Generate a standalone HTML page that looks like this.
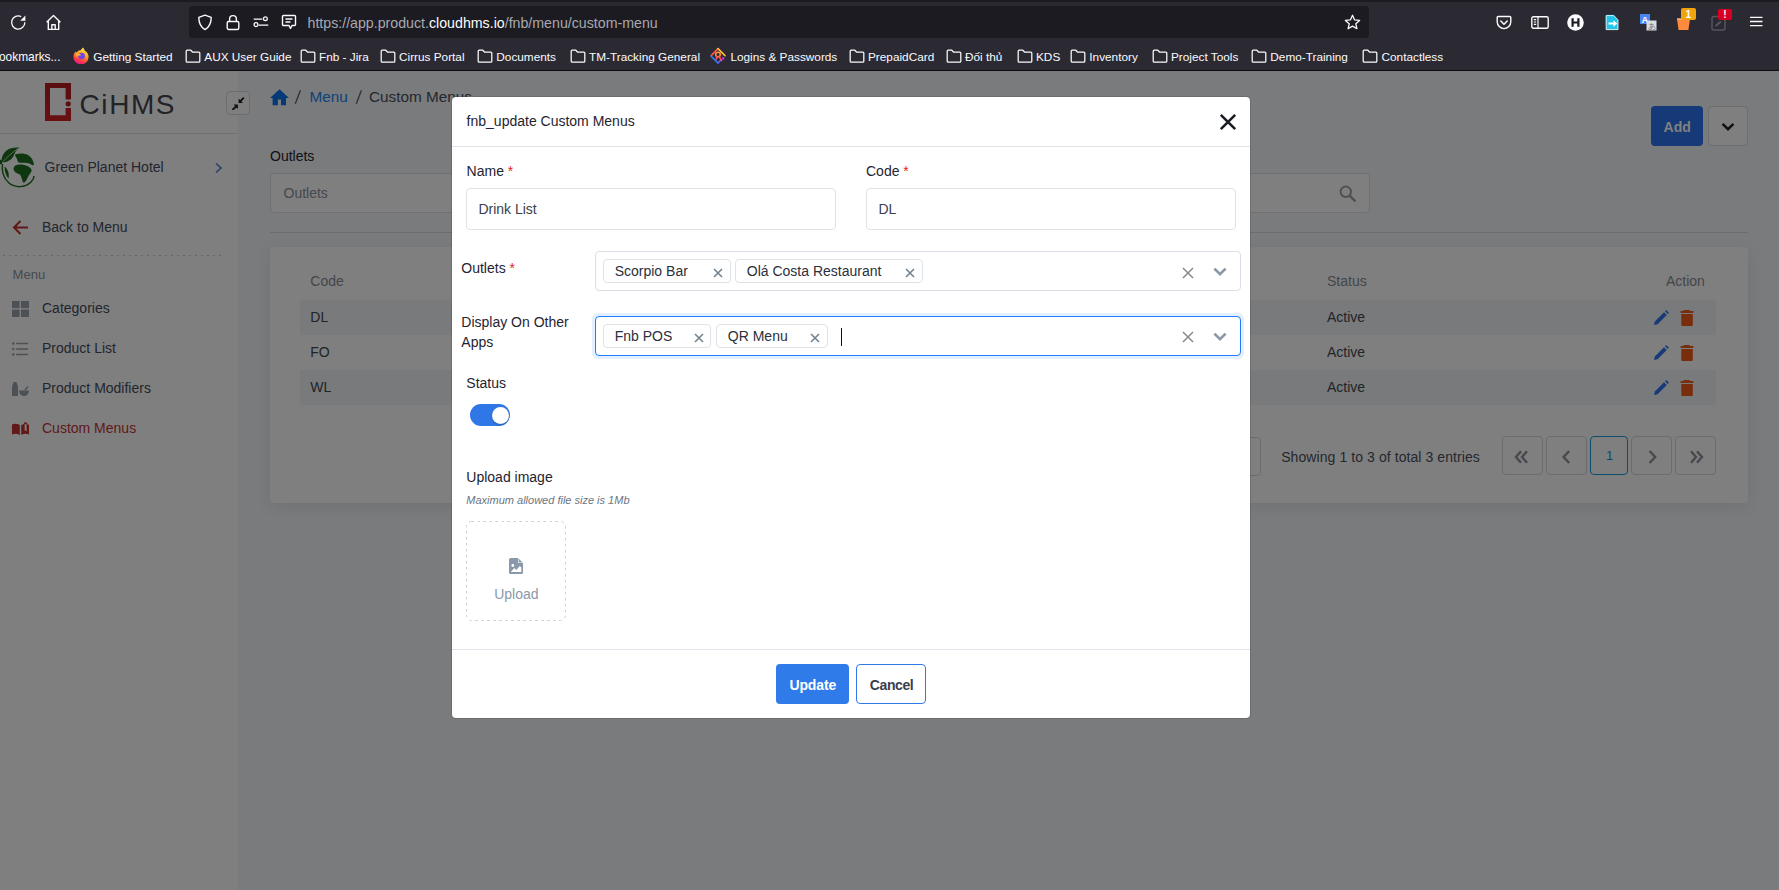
<!DOCTYPE html>
<html><head><meta charset="utf-8"><title>CiHMS</title>
<style>
html,body{margin:0;padding:0;}
body{width:1779px;height:890px;overflow:hidden;position:relative;background:#2b2a33;font-family:"Liberation Sans",sans-serif;}
.t{position:absolute;white-space:nowrap;}
.r{position:absolute;box-sizing:border-box;}
</style></head><body>

<div class="r" style="left:0px;top:0px;width:1779px;height:2px;background:#1c1b22"></div>
<div class="r" style="left:0px;top:2px;width:1779px;height:68px;background:#2b2a33"></div>
<div class="r" style="left:189px;top:6px;width:1180px;height:32px;background:#1c1b22;border-radius:4px"></div>
<div class="r" style="left:0px;top:70px;width:1779px;height:1px;background:#0b0b0e"></div>
<svg class="r" style="left:10px;top:14px;" width="17" height="17" viewBox="0 0 17 17"><path d="M11.2 2.6A6.6 6.6 0 1 0 14.8 8.2" fill="none" stroke="#fbfbfe" stroke-width="1.3"/><path d="M15.4 1.6V6.8H10.2z" fill="#fbfbfe"/></svg>
<svg class="r" style="left:45px;top:14px;" width="17" height="17" viewBox="0 0 17 17"><path d="M1.6 8.2 8.5 1.6l6.9 6.6M3.3 7v8.4h10.4V7M6.8 15.4v-4.6h3.4v4.6" fill="none" stroke="#fbfbfe" stroke-width="1.4" stroke-linejoin="round"/></svg>
<svg class="r" style="left:197px;top:14px;" width="16" height="17" viewBox="0 0 16 17"><path d="M8 1.2 14.2 3.4c0 6-1.8 9.6-6.2 12.2C3.6 13 1.8 9.4 1.8 3.4z" fill="none" stroke="#fbfbfe" stroke-width="1.4" stroke-linejoin="round"/></svg>
<svg class="r" style="left:226px;top:14px;" width="14" height="17" viewBox="0 0 14 17"><rect x="1.2" y="7.5" width="11.6" height="8" rx="1.5" fill="none" stroke="#fbfbfe" stroke-width="1.4"/><path d="M3.6 7.5V5a3.4 3.4 0 0 1 6.8 0v2.5" fill="none" stroke="#fbfbfe" stroke-width="1.4"/></svg>
<svg class="r" style="left:253px;top:16px;" width="16" height="12" viewBox="0 0 16 12"><path d="M.7 3.2h8.6M5.6 9.2h9.7" stroke="#fbfbfe" stroke-width="1.3" fill="none"/><circle cx="12.4" cy="2.8" r="1.9" fill="none" stroke="#fbfbfe" stroke-width="1.25"/><circle cx="3" cy="8.6" r="1.9" fill="none" stroke="#fbfbfe" stroke-width="1.25"/></svg>
<svg class="r" style="left:281px;top:14px;" width="16" height="16" viewBox="0 0 16 16"><path d="M2.5 1.5h11a1 1 0 0 1 1 1v8a1 1 0 0 1-1 1H11l-1.5 2.8L8 11.5H2.5a1 1 0 0 1-1-1v-8a1 1 0 0 1 1-1z" fill="none" stroke="#fbfbfe" stroke-width="1.4" stroke-linejoin="round"/><path d="M4.5 5h7M4.5 8h5" stroke="#fbfbfe" stroke-width="1.3"/></svg>
<div class="t" style="left:307.5px;top:14.23px;font-size:14.2px;line-height:18px;color:#fbfbfe;font-weight:normal;font-style:normal;"><span style="color:#a8a8b1">https://app.product.</span><span style="color:#fbfbfe">cloudhms.io</span><span style="color:#a8a8b1">/fnb/menu/custom-menu</span></div>
<svg class="r" style="left:1344px;top:14px;" width="17" height="16" viewBox="0 0 17 16"><path d="M8.5 1.3l2.1 4.6 5 .5-3.8 3.4 1.1 4.9-4.4-2.6-4.4 2.6 1.1-4.9L1.4 6.4l5-.5z" fill="none" stroke="#fbfbfe" stroke-width="1.3" stroke-linejoin="round"/></svg>
<div class="t" style="left:-1px;top:49.53px;font-size:11.9px;line-height:15px;color:#fbfbfe;font-weight:normal;font-style:normal;">ookmarks...</div>
<svg class="r" style="left:73px;top:47px;" width="16" height="17" viewBox="0 0 16 17"><defs><linearGradient id="ffg" x1="0.75" y1="0" x2="0.35" y2="1"><stop offset="0" stop-color="#fff44f"/><stop offset="0.45" stop-color="#ff9a1a"/><stop offset="0.78" stop-color="#ff3750"/><stop offset="1" stop-color="#e31587"/></linearGradient></defs><path d="M10 .6c1 1.2 1.6 2.3 1.8 3.2C14 5 15.6 7.4 15.6 9.8A7.6 7.6 0 0 1 .4 9.8C.4 7.5 1.4 5.6 2.8 4.4 3 5 3.5 5.4 4 5.6 4.5 4 6 3.2 7.5 3.3 8.4 2.2 9.4 1.4 10 .6z" fill="url(#ffg)"/><circle cx="8.6" cy="9" r="3.3" fill="#6f47e8"/><path d="M3 6.4c1.3-.4 2.7 0 3.8.6.7.4 1.1.9 1.3 1.5-1 .3-2 .1-3 0-1 .1-1.4.9-1.2 1.8C2.9 9.5 2.6 7.7 3 6.4z" fill="#ffb135"/></svg>
<div class="t" style="left:93.3px;top:49.56px;font-size:11.8px;line-height:15px;color:#fbfbfe;font-weight:normal;font-style:normal;">Getting Started</div>
<svg class="r" style="left:184.5px;top:48.5px;" width="16" height="15" viewBox="0 0 16 15"><path d="M1.2 2.2Q1.2 1.2 2.2 1.2H5.8L7.5 3H13.8Q14.8 3 14.8 4V12.2Q14.8 13.2 13.8 13.2H2.2Q1.2 13.2 1.2 12.2Z" fill="none" stroke="#fbfbfe" stroke-width="1.25" stroke-linejoin="round"/></svg>
<div class="t" style="left:204.3px;top:49.56px;font-size:11.8px;line-height:15px;color:#fbfbfe;font-weight:normal;font-style:normal;">AUX User Guide</div>
<svg class="r" style="left:299.5px;top:48.5px;" width="16" height="15" viewBox="0 0 16 15"><path d="M1.2 2.2Q1.2 1.2 2.2 1.2H5.8L7.5 3H13.8Q14.8 3 14.8 4V12.2Q14.8 13.2 13.8 13.2H2.2Q1.2 13.2 1.2 12.2Z" fill="none" stroke="#fbfbfe" stroke-width="1.25" stroke-linejoin="round"/></svg>
<div class="t" style="left:319px;top:49.56px;font-size:11.8px;line-height:15px;color:#fbfbfe;font-weight:normal;font-style:normal;">Fnb - Jira</div>
<svg class="r" style="left:379.5px;top:48.5px;" width="16" height="15" viewBox="0 0 16 15"><path d="M1.2 2.2Q1.2 1.2 2.2 1.2H5.8L7.5 3H13.8Q14.8 3 14.8 4V12.2Q14.8 13.2 13.8 13.2H2.2Q1.2 13.2 1.2 12.2Z" fill="none" stroke="#fbfbfe" stroke-width="1.25" stroke-linejoin="round"/></svg>
<div class="t" style="left:399px;top:49.56px;font-size:11.8px;line-height:15px;color:#fbfbfe;font-weight:normal;font-style:normal;">Cirrus Portal</div>
<svg class="r" style="left:476.5px;top:48.5px;" width="16" height="15" viewBox="0 0 16 15"><path d="M1.2 2.2Q1.2 1.2 2.2 1.2H5.8L7.5 3H13.8Q14.8 3 14.8 4V12.2Q14.8 13.2 13.8 13.2H2.2Q1.2 13.2 1.2 12.2Z" fill="none" stroke="#fbfbfe" stroke-width="1.25" stroke-linejoin="round"/></svg>
<div class="t" style="left:496.3px;top:49.56px;font-size:11.8px;line-height:15px;color:#fbfbfe;font-weight:normal;font-style:normal;">Documents</div>
<svg class="r" style="left:569.5px;top:48.5px;" width="16" height="15" viewBox="0 0 16 15"><path d="M1.2 2.2Q1.2 1.2 2.2 1.2H5.8L7.5 3H13.8Q14.8 3 14.8 4V12.2Q14.8 13.2 13.8 13.2H2.2Q1.2 13.2 1.2 12.2Z" fill="none" stroke="#fbfbfe" stroke-width="1.25" stroke-linejoin="round"/></svg>
<div class="t" style="left:589px;top:49.56px;font-size:11.8px;line-height:15px;color:#fbfbfe;font-weight:normal;font-style:normal;">TM-Tracking General</div>
<div class="t" style="left:730.4px;top:49.56px;font-size:11.8px;line-height:15px;color:#fbfbfe;font-weight:normal;font-style:normal;">Logins &amp; Passwords</div>
<svg class="r" style="left:848.5px;top:48.5px;" width="16" height="15" viewBox="0 0 16 15"><path d="M1.2 2.2Q1.2 1.2 2.2 1.2H5.8L7.5 3H13.8Q14.8 3 14.8 4V12.2Q14.8 13.2 13.8 13.2H2.2Q1.2 13.2 1.2 12.2Z" fill="none" stroke="#fbfbfe" stroke-width="1.25" stroke-linejoin="round"/></svg>
<div class="t" style="left:868px;top:49.56px;font-size:11.8px;line-height:15px;color:#fbfbfe;font-weight:normal;font-style:normal;">PrepaidCard</div>
<svg class="r" style="left:945.5px;top:48.5px;" width="16" height="15" viewBox="0 0 16 15"><path d="M1.2 2.2Q1.2 1.2 2.2 1.2H5.8L7.5 3H13.8Q14.8 3 14.8 4V12.2Q14.8 13.2 13.8 13.2H2.2Q1.2 13.2 1.2 12.2Z" fill="none" stroke="#fbfbfe" stroke-width="1.25" stroke-linejoin="round"/></svg>
<div class="t" style="left:965px;top:49.56px;font-size:11.8px;line-height:15px;color:#fbfbfe;font-weight:normal;font-style:normal;">Đối thủ</div>
<svg class="r" style="left:1016.5px;top:48.5px;" width="16" height="15" viewBox="0 0 16 15"><path d="M1.2 2.2Q1.2 1.2 2.2 1.2H5.8L7.5 3H13.8Q14.8 3 14.8 4V12.2Q14.8 13.2 13.8 13.2H2.2Q1.2 13.2 1.2 12.2Z" fill="none" stroke="#fbfbfe" stroke-width="1.25" stroke-linejoin="round"/></svg>
<div class="t" style="left:1036px;top:49.56px;font-size:11.8px;line-height:15px;color:#fbfbfe;font-weight:normal;font-style:normal;">KDS</div>
<svg class="r" style="left:1069.5px;top:48.5px;" width="16" height="15" viewBox="0 0 16 15"><path d="M1.2 2.2Q1.2 1.2 2.2 1.2H5.8L7.5 3H13.8Q14.8 3 14.8 4V12.2Q14.8 13.2 13.8 13.2H2.2Q1.2 13.2 1.2 12.2Z" fill="none" stroke="#fbfbfe" stroke-width="1.25" stroke-linejoin="round"/></svg>
<div class="t" style="left:1089.3px;top:49.56px;font-size:11.8px;line-height:15px;color:#fbfbfe;font-weight:normal;font-style:normal;">Inventory</div>
<svg class="r" style="left:1151.5px;top:48.5px;" width="16" height="15" viewBox="0 0 16 15"><path d="M1.2 2.2Q1.2 1.2 2.2 1.2H5.8L7.5 3H13.8Q14.8 3 14.8 4V12.2Q14.8 13.2 13.8 13.2H2.2Q1.2 13.2 1.2 12.2Z" fill="none" stroke="#fbfbfe" stroke-width="1.25" stroke-linejoin="round"/></svg>
<div class="t" style="left:1171px;top:49.56px;font-size:11.8px;line-height:15px;color:#fbfbfe;font-weight:normal;font-style:normal;">Project Tools</div>
<svg class="r" style="left:1250.5px;top:48.5px;" width="16" height="15" viewBox="0 0 16 15"><path d="M1.2 2.2Q1.2 1.2 2.2 1.2H5.8L7.5 3H13.8Q14.8 3 14.8 4V12.2Q14.8 13.2 13.8 13.2H2.2Q1.2 13.2 1.2 12.2Z" fill="none" stroke="#fbfbfe" stroke-width="1.25" stroke-linejoin="round"/></svg>
<div class="t" style="left:1270.3px;top:49.56px;font-size:11.8px;line-height:15px;color:#fbfbfe;font-weight:normal;font-style:normal;">Demo-Training</div>
<svg class="r" style="left:1361.5px;top:48.5px;" width="16" height="15" viewBox="0 0 16 15"><path d="M1.2 2.2Q1.2 1.2 2.2 1.2H5.8L7.5 3H13.8Q14.8 3 14.8 4V12.2Q14.8 13.2 13.8 13.2H2.2Q1.2 13.2 1.2 12.2Z" fill="none" stroke="#fbfbfe" stroke-width="1.25" stroke-linejoin="round"/></svg>
<div class="t" style="left:1381.5px;top:49.56px;font-size:11.8px;line-height:15px;color:#fbfbfe;font-weight:normal;font-style:normal;">Contactless</div>
<svg class="r" style="left:710px;top:47px;" width="16" height="17" viewBox="0 0 16 17"><g fill="none" stroke-width="1.6" stroke-linecap="round"><path d="M1.2 8.6 8 1.6" stroke="#ff5a4a"/><path d="M8 1.6 15 8.6" stroke="#ffc23d"/><path d="M1.2 9.2 8 16" stroke="#2e86ff"/><path d="M8 16 11.2 12.8" stroke="#6a5cff"/><circle cx="8" cy="7.6" r="2.3" stroke="#ff8a3d"/><path d="M6.6 9.8 6.4 12.2M9.3 9.8 11.6 13.6" stroke="#ff4a5a"/></g><circle cx="13.2" cy="11.4" r="1.3" fill="#b833e1"/></svg>
<svg class="r" style="left:1496px;top:15px;" width="16" height="15" viewBox="0 0 16 15"><path d="M2.2 1.5h11.6a1 1 0 0 1 1 1v4.3a6.8 6.8 0 0 1-13.6 0V2.5a1 1 0 0 1 1-1z" fill="none" stroke="#fbfbfe" stroke-width="1.4"/><path d="M4.8 6 8 9.2 11.2 6" fill="none" stroke="#fbfbfe" stroke-width="1.5" stroke-linecap="round" stroke-linejoin="round"/></svg>
<svg class="r" style="left:1531px;top:16px;" width="18" height="13" viewBox="0 0 18 13"><rect x="0.8" y="0.8" width="16.4" height="11.4" rx="1.5" fill="none" stroke="#fbfbfe" stroke-width="1.4"/><path d="M7 .8v11.4M2.8 3.6h2.4M2.8 6h2.4M2.8 8.4h2.4" stroke="#fbfbfe" stroke-width="1.2"/></svg>
<svg class="r" style="left:1567px;top:14px;" width="17" height="17" viewBox="0 0 17 17"><circle cx="8.5" cy="8.5" r="8.3" fill="#fbfbfe"/><path d="M5.6 4.3v8.4M11.4 4.3v8.4M5.6 8.5h5.8" stroke="#1c1b22" stroke-width="2.2"/></svg>
<svg class="r" style="left:1604px;top:14px;" width="17" height="17" viewBox="0 0 17 17"><rect x="0.8" y="0.2" width="11" height="11.5" rx="1.8" fill="#0c4a6e"/><path d="M2.2 1.6h7.6l4.2 4.2v9.8H2.2z" fill="#22c4e8" stroke="#eafaff" stroke-width="0.9"/><path d="M4.5 8.6h5V6.2l3.7 3.4-3.7 3.4v-2.4h-5z" fill="#fff"/></svg>
<svg class="r" style="left:1640px;top:14px;" width="17" height="17" viewBox="0 0 17 17"><rect x="0" y="0" width="10" height="10" fill="#4a85f4"/><text x="5" y="8.6" font-size="9.5" font-weight="bold" text-anchor="middle" fill="#fff" font-family="Liberation Sans">A</text><rect x="6.5" y="6.5" width="10" height="10" fill="#d9dde3"/><text x="11.5" y="15" font-size="8" text-anchor="middle" fill="#5f6b78" font-family="Liberation Sans">あ</text></svg>
<svg class="r" style="left:1676px;top:15px;" width="15" height="16" viewBox="0 0 15 16"><path d="M1 4h13l-1.6 11H2.6z" fill="#ff8a3d"/><path d="M1 4h13" stroke="#ffb27a" stroke-width="1.5"/></svg>
<div class="r" style="left:1681px;top:8px;width:15px;height:12px;background:#f0a30a;border-radius:2px"></div>
<div class="t" style="left:1685.5px;top:8.68px;font-size:10px;line-height:12px;color:#fff;font-weight:bold;font-style:normal;">1</div>
<svg class="r" style="left:1711px;top:15px;" width="15" height="16" viewBox="0 0 15 16"><rect x="1" y="1.5" width="13" height="13.5" rx="2" fill="none" stroke="#55555e" stroke-width="1.5"/><path d="M4.5 11 10 6.5" fill="none" stroke="#55555e" stroke-width="2"/></svg>
<div class="r" style="left:1718px;top:9px;width:14px;height:11px;background:#d70022;border-radius:2px"></div>
<div class="t" style="left:1723.3px;top:8.68px;font-size:10px;line-height:12px;color:#fff;font-weight:bold;font-style:normal;">!</div>
<svg class="r" style="left:1750px;top:15px;" width="13" height="12" viewBox="0 0 13 12"><path d="M0 2.4h12.5M0 6.5h12.5M0 10.6h12.5" stroke="#fbfbfe" stroke-width="1.3"/></svg>
<div class="r" style="left:0px;top:71px;width:238px;height:819px;background:#ffffff"></div>
<div class="r" style="left:238px;top:71px;width:1541px;height:819px;background:#f4f6f8"></div>
<svg class="r" style="left:45px;top:83px;" width="26" height="38" viewBox="0 0 26 38"><defs><linearGradient id="lr" x1="0" y1="0" x2="0" y2="1"><stop offset="0" stop-color="#b41c20"/><stop offset="1" stop-color="#d42127"/></linearGradient></defs><path d="M0 0H26V16.6H20.6V5H5V32.2H20.6V24.9H26V38H0Z" fill="url(#lr)"/><circle cx="23.2" cy="20.8" r="2.6" fill="#b81e22"/></svg>
<div class="t" style="left:79.6px;top:86.95px;font-size:28px;line-height:35px;color:#44464c;font-weight:normal;font-style:normal;letter-spacing:1.55px">CiHMS</div>
<div class="r" style="left:226px;top:91px;width:24px;height:24px;border:1px solid #d5d9de;border-radius:4px;background:#fff"></div>
<svg class="r" style="left:231px;top:96px;" width="14" height="14" viewBox="0 0 14 14"><path d="M7.6 6.9V2.6L11.9 6.9z M6.9 8.6H2.6L6.9 12.9z" fill="#1d1f22"/><path d="M9.2 5.3 12.9 1.6M5.3 10.2 1.4 13.9" stroke="#1d1f22" stroke-width="1.9"/></svg>
<div class="r" style="left:0px;top:133px;width:238px;height:1px;background:#dfe3e8"></div>
<svg class="r" style="left:0px;top:142px;" width="36" height="48" viewBox="0 0 36 48"><g fill="#1e6e1e"><path d="M2.5 22C1.5 28 3 36 9 41C15 46 25 46 31 40C33 38 34 36 34 34" fill="none" stroke="#1e6e1e" stroke-width="1.5"/><path d="M1.5 20.5C1 14 5 8 11 6.3C14 5.5 17 5.3 19.8 5.6C17 7 15.5 9.5 14 13C12.5 17 8 20.5 1.5 20.5z"/><path d="M4.5 24.5C8 27 9.2 31 8.7 36.5C6 34 4.5 29 4.5 24.5z"/><path d="M0 17.5L2 18.5 2 22 0 22.5z"/><path d="M15 12.5C19 11 24 11 28 13C31 15 33.5 18 34 22.5L32.5 23.5C31 22 29 21.3 27 21C24.5 20.5 21.5 21 18.5 20.5C17 19 17.5 17 16.5 16C16 15 15.2 14 15 12.5z"/><path d="M13.5 26.5C13.8 23.8 16.8 22.3 20.5 22.6C24.5 22.8 27.8 24 30.5 26C32 27.5 31.8 29.5 30.5 31C29 33 27.5 35.5 26.5 38C25.5 40 24 41 23 40.5C22 37.5 21.5 34.5 20 32.5C17 31.5 13.8 30 13.5 26.5z"/></g><path d="M2.5 20C7 15.5 12 10.5 18.5 6.3" fill="none" stroke="#fff" stroke-width=".7"/></svg>
<div class="t" style="left:44.6px;top:158.30px;font-size:14px;line-height:18px;color:#464c5c;font-weight:normal;font-style:normal;">Green Planet Hotel</div>
<svg class="r" style="left:214px;top:162px;" width="9" height="12" viewBox="0 0 9 12"><path d="M2 1.5 7 6l-5 4.5" fill="none" stroke="#5b7bd5" stroke-width="1.6"/></svg>
<svg class="r" style="left:12px;top:219px;" width="17" height="17" viewBox="0 0 17 17"><path d="M16 8.5H2M8.5 2 2 8.5 8.5 15" fill="none" stroke="#c42f2f" stroke-width="2"/></svg>
<div class="t" style="left:42px;top:218.30px;font-size:14px;line-height:18px;color:#464c5c;font-weight:normal;font-style:normal;">Back to Menu</div>
<svg class="r" style="left:3px;top:254px;" width="220" height="2" viewBox="0 0 220 2"><path d="M0 1.5H220" stroke="#c4c9cf" stroke-width="1" stroke-dasharray="2 4"/></svg>
<div class="t" style="left:12.6px;top:266.65px;font-size:13px;line-height:16px;color:#8d939c;font-weight:normal;font-style:normal;">Menu</div>
<svg class="r" style="left:12px;top:301px;" width="17" height="16" viewBox="0 0 17 16"><rect x="0" y="0" width="7.6" height="7.2" fill="#9aa1aa"/><rect x="9" y="0" width="8" height="7.2" fill="#9aa1aa"/><rect x="0" y="8.6" width="7.6" height="7.4" fill="#9aa1aa"/><rect x="9" y="8.6" width="8" height="7.4" fill="#9aa1aa"/></svg>
<div class="t" style="left:42px;top:299.30px;font-size:14px;line-height:18px;color:#464c5c;font-weight:normal;font-style:normal;">Categories</div>
<svg class="r" style="left:12px;top:342px;" width="17" height="14" viewBox="0 0 17 14"><circle cx="1.3" cy="1.5" r="1.2" fill="#9aa1aa"/><circle cx="1.3" cy="7" r="1.2" fill="#9aa1aa"/><circle cx="1.3" cy="12.5" r="1.2" fill="#9aa1aa"/><path d="M4.2 1.5H16M4.2 7H16M4.2 12.5H16" stroke="#9aa1aa" stroke-width="1.3"/></svg>
<div class="t" style="left:42px;top:339.30px;font-size:14px;line-height:18px;color:#464c5c;font-weight:normal;font-style:normal;">Product List</div>
<svg class="r" style="left:12px;top:382px;" width="17" height="15" viewBox="0 0 17 15"><path d="M0 4.5 1.5 0h3L6 4.5V14H0z" fill="#9aa1aa"/><path d="M7 8.5h10c0 3-2 5.5-5 5.5s-5-2.5-5-5.5z" fill="#9aa1aa"/><path d="M13 8l3-3.5" stroke="#9aa1aa" stroke-width="1.5"/></svg>
<div class="t" style="left:42px;top:379.30px;font-size:14px;line-height:18px;color:#464c5c;font-weight:normal;font-style:normal;">Product Modifiers</div>
<svg class="r" style="left:12px;top:422px;" width="17" height="14" viewBox="0 0 17 14"><path d="M0 2.5c2.5-1 5-1 7.8.6V13C5 11.5 2.5 11.5 0 12.5z" fill="#c23232"/><path d="M17 2.5v10c-2.5-1-5-1-7.8.5V3.1c1-.6 2-1 3-1.2V0l3 1v9l-3-1.2V3" fill="#c23232"/><path d="M12.2 1.9V8.5l2.8 1V2.4" fill="#fff" stroke="#c23232" stroke-width=".8"/></svg>
<div class="t" style="left:42px;top:419.30px;font-size:14px;line-height:18px;color:#c23434;font-weight:normal;font-style:normal;">Custom Menus</div>
<svg class="r" style="left:270px;top:88.5px;" width="19" height="17" viewBox="0 0 19 17"><path d="M9.5 .3 0 9.1h2.6v7.2h5.3v-5.8H11v5.8h5V9.1H19z" fill="#0b74f0"/></svg>
<svg class="r" style="left:294px;top:89px;" width="8" height="16" viewBox="0 0 8 16"><path d="M6.4 1.3 1.3 14.8" stroke="#5c6370" stroke-width="1.3"/></svg>
<div class="t" style="left:309.5px;top:87.35px;font-size:15.3px;line-height:19px;color:#1a82f5;font-weight:normal;font-style:normal;">Menu</div>
<svg class="r" style="left:355px;top:89px;" width="8" height="16" viewBox="0 0 8 16"><path d="M6.4 1.3 1.3 14.8" stroke="#5c6370" stroke-width="1.3"/></svg>
<div class="t" style="left:369px;top:87.35px;font-size:15.3px;line-height:19px;color:#4a505c;font-weight:normal;font-style:normal;">Custom Menus</div>
<div class="r" style="left:1651px;top:106px;width:52px;height:40px;background:#2c74ef;border-radius:4px"></div>
<div class="t" style="left:1663.6px;top:118.30px;font-size:14px;line-height:18px;color:#ffffff;font-weight:bold;font-style:normal;">Add</div>
<div class="r" style="left:1708px;top:106px;width:40px;height:40px;border:1px solid #d8dce2;border-radius:4px;background:#fff"></div>
<svg class="r" style="left:1721px;top:121.5px;" width="14" height="10" viewBox="0 0 14 10"><path d="M1.6 1.8 7 7.2l5.4-5.4" fill="none" stroke="#1d2433" stroke-width="2.6"/></svg>
<div class="t" style="left:270px;top:147.30px;font-size:14px;line-height:18px;color:#1f2430;font-weight:normal;font-style:normal;">Outlets</div>
<div class="r" style="left:270px;top:173px;width:1100px;height:40px;background:#ffffff;border:1px solid #dde1e6;border-radius:4px"></div>
<div class="t" style="left:283.5px;top:184.30px;font-size:14px;line-height:18px;color:#8a9099;font-weight:normal;font-style:normal;">Outlets</div>
<svg class="r" style="left:1339px;top:185px;" width="18" height="18" viewBox="0 0 18 18"><circle cx="6.8" cy="6.8" r="5.2" fill="none" stroke="#9ca1a8" stroke-width="2"/><path d="M10.6 10.6 16.5 16.5" stroke="#9ca1a8" stroke-width="2.4"/></svg>
<div class="r" style="left:270px;top:232px;width:1478px;height:1px;background:#d5d9de"></div>
<div class="r" style="left:270px;top:247px;width:1478px;height:256px;background:#ffffff;border-radius:4px;box-shadow:0 4px 16px rgba(0,0,0,.08)"></div>
<div class="t" style="left:310.3px;top:272.30px;font-size:14px;line-height:18px;color:#868c95;font-weight:normal;font-style:normal;">Code</div>
<div class="t" style="left:1327px;top:272.30px;font-size:14px;line-height:18px;color:#868c95;font-weight:normal;font-style:normal;">Status</div>
<div class="t" style="left:1666px;top:272.30px;font-size:14px;line-height:18px;color:#868c95;font-weight:normal;font-style:normal;">Action</div>
<div class="r" style="left:300px;top:300px;width:1416px;height:35px;background:#f2f4f7"></div>
<div class="t" style="left:310.3px;top:308.30px;font-size:14px;line-height:18px;color:#444953;font-weight:normal;font-style:normal;">DL</div>
<div class="t" style="left:1327px;top:308.30px;font-size:14px;line-height:18px;color:#444953;font-weight:normal;font-style:normal;">Active</div>
<svg class="r" style="left:1653px;top:310px;" width="16" height="16" viewBox="0 0 16 16"><path d="M1 15l.8-3.6L11 2.2 13.8 5 4.6 14.2zM12 1.2l1.2-1.2 2.8 2.8-1.2 1.2z" fill="#2c76f0"/></svg>
<svg class="r" style="left:1680px;top:309px;" width="14" height="18" viewBox="0 0 14 18"><path d="M3.6 1h6.2v1.6H3.6zM.6 1.9h12.8v2.2H.6zM1.3 5.1h11.5v10.9a1 1 0 0 1-1 1H2.3a1 1 0 0 1-1-1z" fill="#f05a1a"/></svg>
<div class="t" style="left:310.3px;top:343.30px;font-size:14px;line-height:18px;color:#444953;font-weight:normal;font-style:normal;">FO</div>
<div class="t" style="left:1327px;top:343.30px;font-size:14px;line-height:18px;color:#444953;font-weight:normal;font-style:normal;">Active</div>
<svg class="r" style="left:1653px;top:345px;" width="16" height="16" viewBox="0 0 16 16"><path d="M1 15l.8-3.6L11 2.2 13.8 5 4.6 14.2zM12 1.2l1.2-1.2 2.8 2.8-1.2 1.2z" fill="#2c76f0"/></svg>
<svg class="r" style="left:1680px;top:344px;" width="14" height="18" viewBox="0 0 14 18"><path d="M3.6 1h6.2v1.6H3.6zM.6 1.9h12.8v2.2H.6zM1.3 5.1h11.5v10.9a1 1 0 0 1-1 1H2.3a1 1 0 0 1-1-1z" fill="#f05a1a"/></svg>
<div class="r" style="left:300px;top:370px;width:1416px;height:35px;background:#f2f4f7"></div>
<div class="t" style="left:310.3px;top:378.30px;font-size:14px;line-height:18px;color:#444953;font-weight:normal;font-style:normal;">WL</div>
<div class="t" style="left:1327px;top:378.30px;font-size:14px;line-height:18px;color:#444953;font-weight:normal;font-style:normal;">Active</div>
<svg class="r" style="left:1653px;top:380px;" width="16" height="16" viewBox="0 0 16 16"><path d="M1 15l.8-3.6L11 2.2 13.8 5 4.6 14.2zM12 1.2l1.2-1.2 2.8 2.8-1.2 1.2z" fill="#2c76f0"/></svg>
<svg class="r" style="left:1680px;top:379px;" width="14" height="18" viewBox="0 0 14 18"><path d="M3.6 1h6.2v1.6H3.6zM.6 1.9h12.8v2.2H.6zM1.3 5.1h11.5v10.9a1 1 0 0 1-1 1H2.3a1 1 0 0 1-1-1z" fill="#f05a1a"/></svg>
<div class="r" style="left:1200px;top:437px;width:61px;height:39px;border:1px solid #d5d9de;border-radius:4px;background:#fff"></div>
<div class="t" style="left:1281.2px;top:448.30px;font-size:14px;line-height:18px;color:#4a505c;font-weight:normal;font-style:normal;letter-spacing:0.08px">Showing 1 to 3 of total 3 entries</div>
<div class="r" style="left:1502px;top:436px;width:41px;height:39px;border:1px solid #d5d9de;border-radius:4px;background:#fff"></div>
<div class="r" style="left:1546px;top:436px;width:41px;height:39px;border:1px solid #d5d9de;border-radius:4px;background:#fff"></div>
<div class="r" style="left:1590px;top:436px;width:38px;height:39px;border:1.5px solid #1a9ad6;border-radius:4px;background:#fff"></div>
<div class="r" style="left:1631px;top:436px;width:41px;height:39px;border:1px solid #d5d9de;border-radius:4px;background:#fff"></div>
<div class="r" style="left:1675px;top:436px;width:41px;height:39px;border:1px solid #d5d9de;border-radius:4px;background:#fff"></div>
<svg class="r" style="left:1514px;top:450px;" width="16" height="14" viewBox="0 0 16 14"><path d="M7 1.2 2 7l5 5.8M13 1.2 8 7l5 5.8" fill="none" stroke="#8c939d" stroke-width="2.4"/></svg>
<svg class="r" style="left:1561px;top:450px;" width="10" height="14" viewBox="0 0 10 14"><path d="M8.2 1 2.6 7l5.6 6" fill="none" stroke="#8c939d" stroke-width="2.4"/></svg>
<div class="t" style="left:1606px;top:447.65px;font-size:13px;line-height:16px;color:#1a8fd0;font-weight:normal;font-style:normal;">1</div>
<svg class="r" style="left:1648px;top:450px;" width="10" height="14" viewBox="0 0 10 14"><path d="M1.6 1 7.2 7l-5.6 6" fill="none" stroke="#8c939d" stroke-width="2.4"/></svg>
<svg class="r" style="left:1689px;top:450px;" width="16" height="14" viewBox="0 0 16 14"><path d="M2 1.2 7 7l-5 5.8M8 1.2 13 7l-5 5.8" fill="none" stroke="#8c939d" stroke-width="2.4"/></svg>
<div class="r" style="left:0px;top:71px;width:1779px;height:819px;background:rgba(0,0,0,.5)"></div>
<div class="r" style="left:452px;top:97px;width:798px;height:621px;background:#ffffff;border-radius:4px;box-shadow:0 0 0 1px rgba(0,0,0,.12)"></div>
<div class="t" style="left:466.6px;top:112.30px;font-size:14px;line-height:18px;color:#1f2430;font-weight:normal;font-style:normal;">fnb_update Custom Menus</div>
<svg class="r" style="left:1219px;top:113px;" width="18" height="18" viewBox="0 0 18 18"><path d="M1.8 1.8 16.2 16.2M16.2 1.8 1.8 16.2" stroke="#1a1d24" stroke-width="2.6"/></svg>
<div class="r" style="left:452px;top:146px;width:798px;height:1px;background:#dee4ea"></div>
<div class="t" style="left:466.6px;top:162.30px;font-size:14px;line-height:18px;color:#1f2430;font-weight:normal;font-style:normal;">Name <span style="color:#e02424">*</span></div>
<div class="r" style="left:466px;top:188px;width:370px;height:42px;border:1px solid #dfe3e8;border-radius:4px"></div>
<div class="t" style="left:478.4px;top:200.30px;font-size:14px;line-height:18px;color:#3a404c;font-weight:normal;font-style:normal;">Drink List</div>
<div class="t" style="left:866px;top:162.30px;font-size:14px;line-height:18px;color:#1f2430;font-weight:normal;font-style:normal;">Code <span style="color:#e02424">*</span></div>
<div class="r" style="left:866px;top:188px;width:370px;height:42px;border:1px solid #dfe3e8;border-radius:4px"></div>
<div class="t" style="left:878.4px;top:200.30px;font-size:14px;line-height:18px;color:#3a404c;font-weight:normal;font-style:normal;">DL</div>
<div class="t" style="left:461.3px;top:259.30px;font-size:14px;line-height:18px;color:#1f2430;font-weight:normal;font-style:normal;">Outlets <span style="color:#e02424">*</span></div>
<div class="r" style="left:595px;top:251px;width:646px;height:40px;border:1px solid #d9dfe6;border-radius:4px"></div>
<div class="r" style="left:603px;top:259px;width:128px;height:24px;border:1px solid #dfe3e8;border-radius:4px;background:#fff"></div>
<div class="t" style="left:614.6999999999999px;top:262.30px;font-size:14px;line-height:18px;color:#2a303c;font-weight:normal;font-style:normal;">Scorpio Bar</div>
<svg class="r" style="left:713px;top:267.5px;" width="10" height="10" viewBox="0 0 10 10"><path d="M1 1l8 8M9 1 1 9" stroke="#72838f" stroke-width="1.6"/></svg>
<div class="r" style="left:735px;top:259px;width:188px;height:24px;border:1px solid #dfe3e8;border-radius:4px;background:#fff"></div>
<div class="t" style="left:746.8px;top:262.30px;font-size:14px;line-height:18px;color:#2a303c;font-weight:normal;font-style:normal;">Olá Costa Restaurant</div>
<svg class="r" style="left:905px;top:267.5px;" width="10" height="10" viewBox="0 0 10 10"><path d="M1 1l8 8M9 1 1 9" stroke="#72838f" stroke-width="1.6"/></svg>
<svg class="r" style="left:1182px;top:267px;" width="12" height="12" viewBox="0 0 12 12"><path d="M1 1l10 10M11 1 1 11" stroke="#8a8a8a" stroke-width="1.5"/></svg>
<svg class="r" style="left:1213px;top:267px;" width="14" height="10" viewBox="0 0 14 10"><path d="M1.4 1.6 7 7.2l5.6-5.6" fill="none" stroke="#8a99a8" stroke-width="2.7"/></svg>
<div class="t" style="left:461.3px;top:313.30px;font-size:14px;line-height:18px;color:#1f2430;font-weight:normal;font-style:normal;">Display On Other</div>
<div class="t" style="left:461.3px;top:333.30px;font-size:14px;line-height:18px;color:#1f2430;font-weight:normal;font-style:normal;">Apps</div>
<div class="r" style="left:592px;top:313px;width:652px;height:46px;border-radius:6px;background:rgba(31,123,255,.12)"></div>
<div class="r" style="left:595px;top:316px;width:646px;height:40px;border:1.6px solid #1f7bff;border-radius:4px;background:#fff"></div>
<div class="r" style="left:603px;top:324px;width:108px;height:24px;border:1px solid #dfe3e8;border-radius:4px;background:#fff"></div>
<div class="t" style="left:614.6999999999999px;top:327.30px;font-size:14px;line-height:18px;color:#2a303c;font-weight:normal;font-style:normal;">Fnb POS</div>
<svg class="r" style="left:694px;top:332.5px;" width="10" height="10" viewBox="0 0 10 10"><path d="M1 1l8 8M9 1 1 9" stroke="#72838f" stroke-width="1.6"/></svg>
<div class="r" style="left:716px;top:324px;width:112px;height:24px;border:1px solid #dfe3e8;border-radius:4px;background:#fff"></div>
<div class="t" style="left:727.8px;top:327.30px;font-size:14px;line-height:18px;color:#2a303c;font-weight:normal;font-style:normal;">QR Menu</div>
<svg class="r" style="left:810px;top:332.5px;" width="10" height="10" viewBox="0 0 10 10"><path d="M1 1l8 8M9 1 1 9" stroke="#72838f" stroke-width="1.6"/></svg>
<div class="r" style="left:841px;top:328px;width:1.4px;height:18px;background:#111"></div>
<svg class="r" style="left:1182px;top:331px;" width="12" height="12" viewBox="0 0 12 12"><path d="M1 1l10 10M11 1 1 11" stroke="#8a8a8a" stroke-width="1.5"/></svg>
<svg class="r" style="left:1213px;top:332px;" width="14" height="10" viewBox="0 0 14 10"><path d="M1.4 1.6 7 7.2l5.6-5.6" fill="none" stroke="#8a99a8" stroke-width="2.7"/></svg>
<div class="t" style="left:466.3px;top:374.30px;font-size:14px;line-height:18px;color:#1f2430;font-weight:normal;font-style:normal;">Status</div>
<div class="r" style="left:470px;top:404px;width:40px;height:22px;background:#2f76e6;border-radius:11px"></div>
<div class="r" style="left:491.5px;top:406.5px;width:17px;height:17px;background:#fff;border-radius:50%;box-shadow:0 1px 2px rgba(0,0,0,.2)"></div>
<div class="t" style="left:466.3px;top:468.30px;font-size:14px;line-height:18px;color:#1f2430;font-weight:normal;font-style:normal;">Upload image</div>
<div class="t" style="left:466.3px;top:493.34px;font-size:11px;line-height:14px;color:#6b7480;font-weight:normal;font-style:italic;">Maximum allowed file size is 1Mb</div>
<svg class="r" style="left:466px;top:521px;" width="100" height="100" viewBox="0 0 100 100"><rect x="0.5" y="0.5" width="99" height="99" rx="5" fill="none" stroke="#c9cfd6" stroke-width="1" stroke-dasharray="2.5 3.5"/></svg>
<svg class="r" style="left:509px;top:558px;" width="14" height="16" viewBox="0 0 14 16"><path d="M1.5 0H9l5 5v9.5a1.5 1.5 0 0 1-1.5 1.5h-11A1.5 1.5 0 0 1 0 14.5v-13A1.5 1.5 0 0 1 1.5 0z" fill="#8a99a9"/><path d="M9 0v5h5z" fill="#fff"/><path d="M9.6 .6v3.8h3.8z" fill="#8a99a9"/><circle cx="3.8" cy="7.5" r="1.4" fill="#fff"/><path d="M1.8 14l3.5-4 2 2 3.5-4 1.5 1.5V14z" fill="#fff"/></svg>
<div class="t" style="left:494.2px;top:585.30px;font-size:14px;line-height:18px;color:#8a99a9;font-weight:normal;font-style:normal;">Upload</div>
<div class="r" style="left:452px;top:649px;width:798px;height:1px;background:#dee4ea"></div>
<div class="r" style="left:776px;top:664px;width:73px;height:40px;background:#2f7be9;border-radius:4px"></div>
<div class="t" style="left:789.5px;top:676.30px;font-size:14px;line-height:18px;color:#ffffff;font-weight:bold;font-style:normal;letter-spacing:-0.15px">Update</div>
<div class="r" style="left:856px;top:664px;width:70px;height:40px;border:1px solid #2f7be9;border-radius:4px;background:#fff"></div>
<div class="t" style="left:869.8px;top:676.30px;font-size:14px;line-height:18px;color:#39404c;font-weight:bold;font-style:normal;letter-spacing:-0.4px">Cancel</div>
</body></html>
